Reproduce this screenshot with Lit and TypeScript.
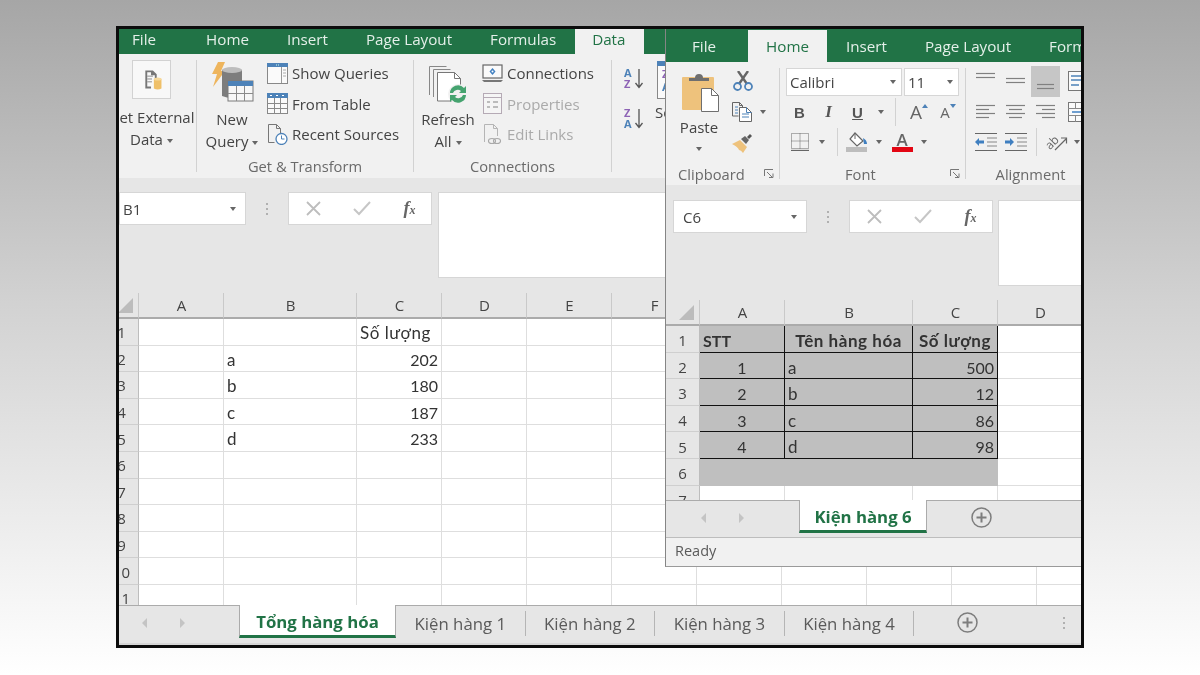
import { LitElement, html, svg, css } from "lit";
import { customElement } from "lit/decorators.js";

// ---- icons ----
const icoGetData = html`<svg width="39" height="39" viewBox="0 0 39 39">
  <path d="M13 11h8l4 4v4h-2v-3h-4v-3h-4v15h4v2h-6z" fill="#777"/>
  <path d="M15 17h6M15 20h5M15 23h5" stroke="#888"/>
  <path d="M22 20q4-2 8 0v10q-4 2-8 0z" fill="#efc069"/><ellipse cx="26" cy="20" rx="4" ry="1.6" fill="#f6d99c"/>
</svg>`;
const icoNewQuery = html`<svg width="43" height="43" viewBox="0 0 43 43">
  <path d="M7 0h7l-4 9h4L2 25l4-13H1z" fill="#eeb55d"/>
  <path d="M11 8q10-4 20 0v26q-10 4-20 0z" fill="#7d7d7d"/><ellipse cx="21" cy="8" rx="10" ry="3" fill="#bdbdbd"/>
  <rect x="17" y="19" width="25" height="20" fill="#f7f7f7" stroke="#7a7a7a"/><rect x="17" y="19" width="25" height="5" fill="#4d82b8"/>
  <path d="M25.500 24v15M33.500 24v15M17 31.500h25" stroke="#8a8a8a"/>
</svg>`;
const icoShowQueries = html`<svg width="21" height="21" viewBox="0 0 21 21">
  <rect x=".5" y=".5" width="20" height="20" fill="#fafafa" stroke="#888"/><rect x="0" y="0" width="21" height="4" fill="#4d82b8"/>
  <path d="M14.500 4v16" stroke="#999"/><path d="M16 7h3M16 10h3M16 13h3" stroke="#aaa"/><path d="M9 2h4" stroke="#cfe" stroke-dasharray="1 1"/>
</svg>`;
const icoFromTable = html`<svg width="21" height="21" viewBox="0 0 21 21">
  <rect x=".5" y=".5" width="20" height="20" fill="#fafafa" stroke="#888"/><rect x="0" y="0" width="21" height="5" fill="#4d82b8"/>
  <path d="M7.500 5v16M13.500 5v16M0 10.500h21M0 15.500h21" stroke="#8a8a8a"/><path d="M3 2.500h2M9 2.500h2M15 2.500h2" stroke="#fff"/>
</svg>`;
const icoRecent = html`<svg width="21" height="21" viewBox="0 0 21 21">
  <path d="M1.500 18.500V.5h8l4 4v5M9.500.5v4h4M1.500 18.500h6" fill="none" stroke="#777"/>
  <circle cx="14.500" cy="15" r="5.500" fill="#fff" stroke="#4d82b8" stroke-width="1.300"/><path d="M14.500 11.500V15h3" fill="none" stroke="#4d82b8"/>
</svg>`;
const icoRefresh = html`<svg width="40" height="40" viewBox="0 0 40 40">
  <path d="M1.500 30V1.500h17M5.500 32V4.500h17" fill="none" stroke="#888"/>
  <path d="M9.500 36V7.500h17l6 6V36z" fill="#fff" stroke="#777"/><path d="M26.500 7.500v6h6" fill="none" stroke="#777"/>
  <circle cx="30" cy="29" r="10" fill="#f1f1f1"/>
  <path d="M22 28a8 8 0 0 1 14-5l2-2v7h-7l2-2a5 5 0 0 0-8 2z M38 30a8 8 0 0 1-14 5l-2 2v-7h7l-2 2a5 5 0 0 0 8-2z" fill="#45a36f"/>
</svg>`;
const icoConnections = html`<svg width="21" height="19" viewBox="0 0 21 19">
  <rect x="1" y="1" width="19" height="13" fill="#fafafa" stroke="#666" stroke-width="1.200"/>
  <path d="M0 16h21l-2 2H2z" fill="#777"/><path d="M10.500 4l3 3.500-3 3.500-3-3.500z" fill="#3f7fc0"/><circle cx="10.500" cy="7.500" r="1" fill="#fff"/>
</svg>`;
const icoProperties = html`<svg width="19" height="21" viewBox="0 0 19 21">
  <rect x=".5" y=".5" width="18" height="20" fill="#f5f5f5" stroke="#b5aab5"/><path d="M0 4.500h19" stroke="#b5aab5"/>
  <path d="M4 9h3M4 14h3M10 9h5M10 14h5" stroke="#a9a9a9" stroke-width="1.500"/>
</svg>`;
const icoEditLinks = html`<svg width="19" height="21" viewBox="0 0 19 21">
  <path d="M1.500 18V.5h9l4 4V12M10.500.5v4h4" fill="none" stroke="#b5b5b5"/>
  <ellipse cx="9" cy="17" rx="3.500" ry="2.500" fill="none" stroke="#a9a9a9" stroke-width="1.200"/><ellipse cx="14" cy="17" rx="3.500" ry="2.500" fill="none" stroke="#a9a9a9" stroke-width="1.200"/>
</svg>`;
const icoSort = (top: string, bottom: string, topFill: string, bottomFill: string) => html`<svg width="20" height="23" viewBox="0 0 20 23">
  <text x="0" y="10" class="sort" fill=${topFill}>${top}</text><text x="0" y="21" class="sort" fill=${bottomFill}>${bottom}</text>
  <path d="M15 2v18M11.500 16l3.500 4.500 3.500-4.500" fill="none" stroke="#555" stroke-width="1.300"/>
</svg>`;
const icoSortBig = html`<svg width="24" height="38" viewBox="0 0 24 38">
  <rect x=".5" y=".5" width="23" height="37" fill="#fafafa" stroke="#888"/><rect width="24" height="5" fill="#4d82b8"/>
  <text x="5" y="17" class="sort" fill="#8d63b5">Z</text><text x="5" y="30" class="sort" fill="#4d82b8">A</text>
</svg>`;
const icoPaste = html`<svg width="37" height="40" viewBox="0 0 37 40">
  <rect x="0" y="5" width="32" height="33" rx="1" fill="#eec27c"/>
  <path d="M7 9V6h6q0-4 4-4t4 4h6v3z" fill="#6f6f6f"/>
  <path d="M19.500 16.500h10l7 7v16h-17z" fill="#fff" stroke="#6f6f6f"/><path d="M29.500 16.500v7h7" fill="none" stroke="#6f6f6f"/>
</svg>`;
const icoCut = html`<svg width="20" height="20" viewBox="0 0 20 20">
  <path d="M5 0l9 13M15 0L6 13" stroke="#666" stroke-width="2.400"/>
  <circle cx="4.500" cy="15.500" r="3.500" fill="none" stroke="#4d82b8" stroke-width="1.800"/><circle cx="15.500" cy="15.500" r="3.500" fill="none" stroke="#4d82b8" stroke-width="1.800"/>
</svg>`;
const icoCopy = html`<svg width="21" height="20" viewBox="0 0 21 20">
  <path d="M.5 14V.5h7l3 3V6M7.500.5v3h3M.5 14h6" fill="none" stroke="#666"/>
  <path d="M7.500 5.500h7l5 5v9h-12z" fill="#fff" stroke="#666"/><path d="M14.500 5.500v5h5M10 12h7M10 15h7" fill="none" stroke="#4d82b8"/>
  <path d="M3 5h3M3 8h3M3 11h3" stroke="#4d82b8"/>
</svg>`;
const icoPainter = html`<svg width="21" height="20" viewBox="0 0 21 20">
  <path d="M0 11l8-4 7 7-4 6q-2-3-4-3-1-3-7-6z" fill="#eec27c"/>
  <path d="M9 6l4-3 4 4-3 4z" fill="#666"/><path d="M15 4l3-3 2 2-3 3z" fill="#555"/>
</svg>`;
const icoBorder = html`<svg width="18" height="18" viewBox="0 0 18 18">
  <path d="M.5 .5h17v15H.5zM9 .5v15M.5 8h17" fill="none" stroke="#666" stroke-dasharray="1 1"/><path d="M0 17.500h18" stroke="#666" stroke-width="1.300"/>
</svg>`;
const icoFill = html`<svg width="22" height="20" viewBox="0 0 22 20">
  <path d="M9 1l8 8-6 5-7-7z" fill="#fff" stroke="#666" stroke-width="1.200"/><path d="M9 1v6" stroke="#666"/>
  <path d="M17 6q4 2 4 6h-3z" fill="#3f7fc0"/><rect x="0" y="15" width="21" height="5" fill="#bdbdbd"/>
</svg>`;
const lines = (rows: [number, number, number][], w = 20, h = 20, stroke = "#808080") => html`<svg width=${w} height=${h} viewBox="0 0 ${w} ${h}">
  ${rows.map(([x1, x2, y]) => svg`<path d="M${x1} ${y}.5H${x2}" stroke=${stroke} stroke-width="1.200"/>`)}
</svg>`;
const icoIndent = (dir: number) => html`<svg width="22" height="20" viewBox="0 0 22 20">
  <path d="M0 1.500h22M0 18.500h22" stroke="#666" stroke-width="1.200"/><path d="M12 6h10M12 10h10M12 14h10" stroke="#888" stroke-width="1.200"/>
  <path d=${dir < 0 ? "M0 10l4-4v2.500h5v3H4V14z" : "M9 10L5 6v2.500H0v3h5V14z"} fill="#3f7fc0"/>
</svg>`;
const icoOrient = html`<svg width="22" height="20" viewBox="0 0 22 20">
  <text x="0" y="15" class="orient" transform="rotate(-45 6 12)">ab</text><path d="M9 18L20 7M15 6h5.500v5.500" fill="none" stroke="#666" stroke-width="1.200"/>
</svg>`;
const icoWrap = html`<svg class="edge" width="22" height="20" viewBox="0 0 22 20">
  <rect x=".5" y=".5" width="21" height="19" fill="#fafafa" stroke="#777"/><path d="M3 5h16M3 9h12M3 14h8" stroke="#4d82b8" stroke-width="1.300"/>
</svg>`;
const icoMerge = html`<svg class="edge" width="22" height="20" viewBox="0 0 22 20">
  <rect x=".5" y=".5" width="21" height="19" fill="#fafafa" stroke="#777"/><path d="M0 6.500h22M0 13.500h22M7.500 0v6M7.500 14v6M14.500 0v6M14.500 14v6" stroke="#888"/>
  <path d="M4 10h14" stroke="#3f7fc0" stroke-width="1.500"/>
</svg>`;
const icoPlus = html`<svg width="21" height="21" viewBox="0 0 21 21">
  <circle cx="10.500" cy="10.500" r="9.500" fill="none" stroke="#7d7d7d" stroke-width="1.500"/><path d="M10.500 5.500v10M5.500 10.500h10" stroke="#7d7d7d" stroke-width="2"/>
</svg>`;
const icoX = html`<svg width="15" height="15" viewBox="0 0 15 15"><path d="M1 1l13 13M14 1L1 14" stroke="#bdbdbd" stroke-width="1.800"/></svg>`;
const icoCheck = html`<svg width="18" height="15" viewBox="0 0 18 15"><path d="M1 8l5 5L17 1" fill="none" stroke="#c6c6c6" stroke-width="2"/></svg>`;
const icoLauncher = html`<svg width="10" height="10" viewBox="0 0 10 10"><path d="M.5 7V.5H9M3 3l5 5M5 8.500h4v-4" fill="none" stroke="#777"/></svg>`;
const navArrows = html`<svg width="43" height="12" viewBox="0 0 43 12"><path d="M5 1L0 6l5 5zM38 1l5 5-5 5z" fill="#c4c4c4"/></svg>`;

// ---- sheet data ----
type Cell = { t?: string | number; c?: string };

const LEFT_COLS = [20, 85, 133, 85, 85, 85, 85, 85, 85, 85, 85, 85, 85];
const RIGHT_COLS = [34, 85, 128, 85, 85];
const HEADS = "ABCDEFGHIJKL";

const leftData: Record<string, Cell> = {
  "1-2": { t: "Số lượng", c: "txt" },
  "2-1": { t: "a", c: "txt" }, "2-2": { t: 202, c: "num" },
  "3-1": { t: "b", c: "txt" }, "3-2": { t: 180, c: "num" },
  "4-1": { t: "c", c: "txt" }, "4-2": { t: 187, c: "num" },
  "5-1": { t: "d", c: "txt" }, "5-2": { t: 233, c: "num" },
};

const rightData: Record<string, Cell> = {
  "1-0": { t: "STT", c: "b" }, "1-1": { t: "Tên hàng hóa", c: "b ctr txt" }, "1-2": { t: "Số lượng", c: "b ctr txt" },
  "2-0": { t: 1, c: "ctr" }, "2-1": { t: "a", c: "txt" }, "2-2": { t: 500, c: "num" },
  "3-0": { t: 2, c: "ctr" }, "3-1": { t: "b", c: "txt" }, "3-2": { t: 12, c: "num" },
  "4-0": { t: 3, c: "ctr" }, "4-1": { t: "c", c: "txt" }, "4-2": { t: 86, c: "num" },
  "5-0": { t: 4, c: "ctr" }, "5-1": { t: "d", c: "txt" }, "5-2": { t: 98, c: "num" },
};

@customElement("app-root")
export class AppRoot extends LitElement {
  static styles = css`
    :host {
      display: flex;
      width: 1200px;
      height: 675px;
      padding: 26px 116px 27px;
      box-sizing: border-box;
      background: linear-gradient(#a6a6a6 0%, #d2d2d2 45%, #ffffff 100%);
      font-family: "Open Sans", "Noto Sans", sans-serif;
      color: #444;
    }
    .frame {
      position: relative;
      flex: 1;
      border: 3px solid #0c0c0c;
      overflow: hidden;
      background: #fff;
      filter: blur(0.45px);
    }
    .window {
      display: flex;
      flex-direction: column;
      height: 100%;
    }
    .window.front {
      position: absolute;
      top: 0;
      left: 546px;
      right: 0;
      height: 538px;
      background: #fff;
      border-left: 1px solid #858585;
      border-bottom: 1px solid #9a9a9a;
      box-sizing: border-box;
    }

    /* title tabs */
    .tabs {
      display: flex;
      flex: none;
      height: 25px;
      background: #217346;
      color: #e4efe9;
      font-size: 15.2px;
      white-space: nowrap;
      overflow: hidden;
    }
    .tabs span {
      padding: 0 19px;
      line-height: 18px;
      padding-top: 1px;
    }
    .tabs .file {
      padding: 1px 31px 0 13px;
    }
    .tabs .on {
      background: #f1f1f1;
      color: #217346;
      padding: 1px 19px 0 17px;
    }
    .front .tabs {
      height: 33px;
    }
    .front .tabs span {
      line-height: 33px;
      padding-top: 1px;
    }
    .front .tabs .file {
      padding-left: 26px;
      padding-right: 32px;
    }
    .front .tabs .on {
      padding: 1px 18px 0 18px;
      margin-top: 1px;
      line-height: 31px;
    }

    /* ribbon */
    .ribbon {
      display: flex;
      flex: none;
      height: 124px;
      background: #f1f1f1;
      font-size: 15px;
      white-space: nowrap;
    }
    .group {
      display: flex;
      flex-direction: column;
      flex: none;
      border-right: 1px solid #d2d2d2;
      margin: 6px 0;
      position: relative;
    }
    .body {
      display: flex;
      flex: 1;
      margin-top: -6px;
      min-height: 0;
    }
    .foot {
      display: flex;
      justify-content: center;
      align-items: center;
      height: 20px;
      margin-bottom: -4px;
      color: #6a6a6a;
      font-size: 14.7px;
    }
    .big {
      display: flex;
      flex-direction: column;
      align-items: center;
      flex: none;
      padding-top: 8px;
      line-height: 22px;
    }
    .big svg {
      margin-bottom: 3px;
    }
    .small-col {
      display: flex;
      flex-direction: column;
      padding-top: 4px;
    }
    .small {
      display: flex;
      align-items: center;
      gap: 4px;
      height: 30.5px;
    }
    .small .ic {
      display: flex;
      justify-content: center;
      width: 21px;
    }
    .off {
      color: #aaa;
    }
    .caret {
      display: inline-block;
      width: 0;
      height: 0;
      margin-left: 4px;
      vertical-align: middle;
      border-left: 3.5px solid transparent;
      border-right: 3.5px solid transparent;
      border-top: 4px solid #666;
    }
    .g-ext {
      width: 77px;
    }
    .g-ext .body {
      justify-content: center;
      padding-right: 12px;
    }
    .g-ext .big {
      padding-top: 6px;
    }
    .tile {
      display: flex;
      align-items: center;
      justify-content: center;
      width: 39px;
      height: 39px;
      margin-bottom: 7px;
      box-sizing: border-box;
      background: #f8f8f8;
      border: 1px solid #d2d2d2;
    }
    .g-get {
      width: 216px;
    }
    .g-get .big {
      width: 70px;
    }
    .g-conn {
      width: 197px;
    }
    .g-conn .big {
      width: 68px;
      padding-top: 11px;
    }
    .g-sort .body {
      padding-left: 12px;
      gap: 11px;
    }
    .sort-col {
      display: flex;
      flex-direction: column;
      gap: 17px;
      padding-top: 13px;
    }
    .g-sort .big {
      padding-top: 7px;
      line-height: 20px;
    }
    text.sort {
      font: 700 11px "Open Sans", sans-serif;
    }
    text.orient {
      font: 12px "Open Sans", sans-serif;
      fill: #666;
    }

    .front .ribbon {
      height: 123px;
    }
    .g-clip {
      width: 113px;
    }
    .g-clip .big {
      width: 66px;
      padding-top: 10px;
    }
    .g-clip .big svg {
      margin: 0 0 4px 3px;
    }
    .g-clip .big .caret {
      margin-top: 9px;
    }
    .g-clip .small-col {
      padding-top: 3px;
    }
    .g-clip .small {
      height: 31px;
      gap: 7px;
    }
    .front .foot {
      margin-bottom: -5px;
    }
    .foot.split {
      justify-content: flex-start;
      padding: 0 5px 0 12px;
    }
    .foot.split svg {
      margin-left: auto;
    }
    .g-font {
      width: 185px;
    }
    .g-font .body,
    .g-align .body {
      flex-direction: column;
      padding-left: 5px;
    }
    .selects {
      display: flex;
      gap: 2px;
      height: 28px;
      margin: 6px 0 0 1px;
    }
    .select {
      display: flex;
      align-items: center;
      justify-content: space-between;
      box-sizing: border-box;
      padding: 0 5px 0 3px;
      background: #fff;
      border: 1px solid #d6d6d6;
    }
    .select.face {
      width: 116px;
    }
    .select.size {
      width: 55px;
    }
    .row {
      display: grid;
      align-items: center;
      justify-items: center;
    }
    .row2 {
      grid-template-columns: 29px 29px 29px 18px 10px 32px 26px;
      height: 32px;
    }
    .row3 {
      grid-template-columns: 30px 14px 16px 24px 20px 26px 18px;
      height: 28px;
    }
    .vr {
      width: 1px;
      height: 28px;
      background: #d2d2d2;
    }
    .caret.flat {
      margin-left: 0;
    }
    .b-ic {
      font-size: 15px;
      font-weight: 700;
      color: #555;
      font-family: "Liberation Sans", sans-serif;
    }
    .b-ic.i {
      font-style: italic;
      font-family: "Liberation Serif", serif;
      font-size: 17px;
    }
    .b-ic.u {
      text-decoration: underline;
    }
    .grow-a {
      position: relative;
      color: #666;
      font-size: 19px;
      line-height: 20px;
    }
    .grow-a.sm {
      font-size: 15px;
    }
    .grow-a::after {
      content: "";
      position: absolute;
      top: 2px;
      left: 100%;
      border-left: 3px solid transparent;
      border-right: 3px solid transparent;
      border-bottom: 4px solid #4d82b8;
    }
    .grow-a.sm::after {
      border-bottom: 0;
      border-top: 4px solid #4d82b8;
    }
    .red-a {
      display: flex;
      flex-direction: column;
      align-items: center;
      width: 21px;
      color: #666;
      font-size: 17px;
      line-height: 15px;
      font-weight: 600;
    }
    .red-a::after {
      content: "";
      align-self: stretch;
      height: 5px;
      background: #e30613;
    }
    .foot.g-foot-font {
      justify-content: flex-start;
      padding: 0 5px 0 65px;
    }
    .g-foot-font svg {
      margin-left: auto;
    }
    .g-align {
      width: 115px;
      border-right: 0;
    }
    .a1,
    .a2 {
      grid-template-columns: 30px 30px 29px 30px;
    }
    .a1 {
      height: 32px;
      margin-top: 3px;
    }
    .a2 {
      height: 30px;
    }
    .a3 {
      grid-template-columns: 30px 30px 10px 32px 8px;
      height: 30px;
    }
    .edge {
      justify-self: start;
      margin-left: 8px;
    }
    .pressed {
      display: flex;
      align-items: center;
      justify-content: center;
      width: 29px;
      height: 31px;
      background: #c6c6c6;
    }
    .g-align .foot {
      padding-left: 14px;
    }

    /* formula bar */
    .formula {
      display: flex;
      flex: none;
      height: 115px;
      padding-top: 14px;
      box-sizing: border-box;
      background: #e6e6e6;
      font-size: 15px;
      overflow: hidden;
    }
    .front .formula {
      padding: 15px 0 0 7px;
    }
    .name {
      display: flex;
      align-items: center;
      justify-content: space-between;
      flex: none;
      box-sizing: border-box;
      width: 127px;
      height: 33px;
      padding: 0 9px 0 3px;
      background: #fff;
      border: 1px solid #d6d6d6;
      color: #444;
    }
    .front .name {
      width: 134px;
      padding: 0 9px;
    }
    .dots {
      display: flex;
      flex-direction: column;
      align-items: center;
      justify-content: center;
      gap: 3px;
      flex: none;
      width: 42px;
      height: 33px;
    }
    .dots i {
      width: 2px;
      height: 2px;
      background: #b0b0b0;
    }
    .fx-box {
      display: grid;
      grid-template-columns: 48px 49px 47px;
      align-items: center;
      justify-items: center;
      flex: none;
      box-sizing: border-box;
      width: 144px;
      height: 33px;
      background: #fff;
      border: 1px solid #d6d6d6;
    }
    .fx {
      font: italic 700 18px "Liberation Serif", serif;
      color: #666;
    }
    .fx small {
      font-size: 12px;
    }
    .input {
      flex: 1;
      height: 86px;
      margin-left: 6px;
      background: #fff;
      border: 1px solid #d6d6d6;
      box-sizing: border-box;
    }
    .front .formula .input {
      margin-left: 5px;
      border-right: 0;
    }

    /* grid */
    .sheet {
      display: grid;
      flex: 1;
      min-height: 0;
      grid-auto-rows: 26.6px;
      grid-template-rows: 26px;
      align-content: start;
      overflow: hidden;
      background: #fff;
      font-family: Lato, "Noto Sans", sans-serif;
      font-size: 16px;
      color: #333;
    }
    .ch {
      display: flex;
      align-items: center;
      justify-content: center;
      height: 26px;
      padding-left: 1px;
      box-sizing: border-box;
      background: #e6e6e6;
      border-right: 1px solid #c9c9c9;
      border-bottom: 2px solid #ababab;
      font: 15px "Open Sans", sans-serif;
      color: #444;
    }
    .corner {
      position: relative;
    }
    .corner::after {
      content: "";
      position: absolute;
      right: 5px;
      bottom: 4px;
      border-left: 15px solid transparent;
      border-bottom: 15px solid #bcbcbc;
    }
    .rh {
      display: flex;
      align-items: center;
      justify-content: center;
      padding-top: 1px;
      box-sizing: border-box;
      background: #e6e6e6;
      border-right: 1px solid #bdbdbd;
      border-bottom: 1px solid #cfcfcf;
      font: 15px "Open Sans", sans-serif;
      color: #444;
    }
    .front .rh {
      padding-top: 3px;
    }
    .rh.cut span {
      flex: none;
      width: 34px;
      margin-left: -14px;
      text-align: center;
    }
    .c {
      box-sizing: border-box;
      padding: 0 3px;
      line-height: 27px;
      border-right: 1px solid #dedede;
      border-bottom: 1px solid #dedede;
      white-space: nowrap;
      overflow: hidden;
    }
    .front .c {
      line-height: 29px;
    }
    .c.txt {
      font-size: 17px;
      letter-spacing: 0.55px;
    }
    .c.num {
      text-align: right;
    }
    .c.ctr {
      text-align: center;
    }
    .c.b {
      font-weight: 700;
    }
    .c.sel {
      background: #bfbfbf;
      border-right-color: #bfbfbf;
      border-bottom-color: #bfbfbf;
    }
    .c.line {
      border-right: 1px solid #111;
      border-bottom: 1px solid #111;
    }

    /* sheet tabs */
    .bar {
      display: flex;
      align-items: flex-start;
      flex: none;
      box-sizing: border-box;
      height: 40px;
      background: #e6e6e6;
      border-top: 1px solid #ababab;
      border-bottom: 2px solid #d6d6d6;
      font-size: 16.8px;
      color: #5a5a5a;
      white-space: nowrap;
    }
    .front .bar {
      height: 38px;
      border-bottom: 1px solid #bdbdbd;
    }
    .nav {
      display: flex;
      align-items: center;
      justify-content: center;
      flex: none;
      width: 120px;
      height: 33px;
      padding-right: 32px;
      box-sizing: border-box;
    }
    .front .nav {
      width: 133px;
      padding: 0 20px 0 0;
    }
    .sheet-tab {
      display: flex;
      align-items: center;
      justify-content: center;
      flex: none;
      box-sizing: border-box;
      width: 157px;
      height: 33px;
      margin-top: -1px;
      padding-top: 3px;
      background: #fff;
      color: #217346;
      font-weight: 700;
      border-left: 1px solid #ababab;
      border-right: 1px solid #ababab;
      border-bottom: 3px solid #217346;
    }
    .front .sheet-tab {
      width: 128px;
    }
    .other {
      flex: none;
      height: 25px;
      margin-top: 5px;
      padding: 0 18.5px;
      line-height: 25px;
      border-right: 1px solid #b5b5b5;
    }
    .add {
      display: flex;
      flex: none;
      margin: 6px 0 0 43px;
    }
    .front .add {
      margin-left: 44px;
    }
    .bar .dots {
      margin-left: auto;
      width: 34px;
    }
    .status {
      flex: none;
      height: 28px;
      box-sizing: border-box;
      padding: 3px 9px;
      background: #f1f1f1;
      font-size: 14.5px;
      color: #5a5a5a;
    }
  `;

  renderSheet(colsW: number[], rows: number, data: Record<string, Cell>, front: boolean) {
    const tpl = colsW.map((w) => `${w}px`).join(" ");
    return html`<div class="sheet" style="grid-template-columns:${tpl}">
      ${colsW.map((_, i) =>
        i === 0
          ? html`<div class="ch corner"></div>`
          : html`<div class="ch">${HEADS[i - 1]}</div>`
      )}
      ${Array.from({ length: rows }, (_, r) => r + 1).map(
        (r) => html`
          <div class="rh ${front ? "" : "cut"}"><span>${r}</span></div>
          ${colsW.slice(1).map((_, c) => {
            const cell = data[`${r}-${c}`];
            const inBlock = front && c < 3 && r <= 6;
            const cls = [
              "c",
              cell?.c ?? "",
              inBlock ? "sel" : "",
              inBlock && r <= 5 ? "line" : "",
            ].join(" ");
            return html`<div class=${cls}>${cell?.t ?? ""}</div>`;
          })}
        `
      )}
    </div>`;
  }

  renderFormula(name: string) {
    return html`<div class="formula">
      <div class="name">${name}<span class="caret"></span></div>
      <div class="dots"><i></i><i></i><i></i></div>
      <div class="fx-box">${icoX}${icoCheck}<span class="fx">f<small>x</small></span></div>
      <div class="input"></div>
    </div>`;
  }

  renderBack() {
    return html`<div class="window">
      <div class="tabs">
        <span class="file">File</span><span>Home</span><span>Insert</span><span>Page Layout</span><span>Formulas</span><span class="on">Data</span>
      </div>
      <div class="ribbon">
        <div class="group g-ext">
          <div class="body">
            <div class="big"><div class="tile">${icoGetData}</div><div>Get External</div><div>Data<span class="caret"></span></div></div>
          </div>
        </div>
        <div class="group g-get">
          <div class="body">
            <div class="big">${icoNewQuery}<div>New</div><div>Query<span class="caret"></span></div></div>
            <div class="small-col">
              <div class="small"><span class="ic">${icoShowQueries}</span>Show Queries</div>
              <div class="small"><span class="ic">${icoFromTable}</span>From Table</div>
              <div class="small"><span class="ic">${icoRecent}</span>Recent Sources</div>
            </div>
          </div>
          <div class="foot">Get &amp; Transform</div>
        </div>
        <div class="group g-conn">
          <div class="body">
            <div class="big">${icoRefresh}<div>Refresh</div><div>All<span class="caret"></span></div></div>
            <div class="small-col">
              <div class="small"><span class="ic">${icoConnections}</span>Connections</div>
              <div class="small off"><span class="ic">${icoProperties}</span>Properties</div>
              <div class="small off"><span class="ic">${icoEditLinks}</span>Edit Links</div>
            </div>
          </div>
          <div class="foot">Connections</div>
        </div>
        <div class="group g-sort">
          <div class="body">
            <div class="sort-col">${icoSort("A", "Z", "#4d82b8", "#8d63b5")}${icoSort("Z", "A", "#8d63b5", "#4d82b8")}</div>
            <div class="big">${icoSortBig}<div>Sort</div></div>
          </div>
        </div>
      </div>
      ${this.renderFormula("B1")}
      ${this.renderSheet(LEFT_COLS, 11, leftData, false)}
      <div class="bar">
        <div class="nav">${navArrows}</div>
        <div class="sheet-tab">Tổng hàng hóa</div>
        <div class="other">Kiện hàng 1</div>
        <div class="other">Kiện hàng 2</div>
        <div class="other">Kiện hàng 3</div>
        <div class="other">Kiện hàng 4</div>
        <div class="add">${icoPlus}</div>
        <div class="dots"><i></i><i></i><i></i></div>
      </div>
    </div>`;
  }

  renderFront() {
    return html`<div class="window front">
      <div class="tabs">
        <span class="file">File</span><span class="on">Home</span><span>Insert</span><span>Page Layout</span><span>Formulas</span>
      </div>
      <div class="ribbon">
        <div class="group g-clip">
          <div class="body">
            <div class="big">${icoPaste}<div>Paste</div><span class="caret flat"></span></div>
            <div class="small-col">
              <div class="small"><span class="ic">${icoCut}</span></div>
              <div class="small"><span class="ic">${icoCopy}</span><span class="caret flat"></span></div>
              <div class="small"><span class="ic">${icoPainter}</span></div>
            </div>
          </div>
          <div class="foot split">Clipboard${icoLauncher}</div>
        </div>
        <div class="group g-font">
          <div class="body">
            <div class="selects">
              <div class="select face">Calibri<span class="caret flat"></span></div>
              <div class="select size">11<span class="caret flat"></span></div>
            </div>
            <div class="row row2">
              <span class="b-ic">B</span><span class="b-ic i">I</span><span class="b-ic u">U</span><span class="caret flat"></span><span class="vr"></span>
              <span class="grow-a">A</span><span class="grow-a sm">A</span>
            </div>
            <div class="row row3">
              ${icoBorder}<span class="caret flat"></span><span class="vr"></span>${icoFill}<span class="caret flat"></span>
              <span class="red-a">A</span><span class="caret flat"></span>
            </div>
          </div>
          <div class="foot g-foot-font">Font${icoLauncher}</div>
        </div>
        <div class="group g-align">
          <div class="body">
            <div class="row a1">
              ${lines([[0, 19, 2], [0, 19, 6]])}${lines([[0, 19, 7], [0, 19, 11]])}
              <div class="pressed">${lines([[1, 18, 13], [1, 18, 17]])}</div>${icoWrap}
            </div>
            <div class="row a2">
              ${lines([[0, 19, 3], [0, 13, 7], [0, 19, 11], [0, 13, 15]])}${lines([[0, 19, 3], [3, 16, 7], [0, 19, 11], [3, 16, 15]])}
              ${lines([[0, 19, 3], [6, 19, 7], [0, 19, 11], [6, 19, 15]])}${icoMerge}
            </div>
            <div class="row a3">
              ${icoIndent(-1)}${icoIndent(1)}<span class="vr"></span>${icoOrient}<span class="caret flat"></span>
            </div>
          </div>
          <div class="foot">Alignment</div>
        </div>
      </div>
      ${this.renderFormula("C6")}
      ${this.renderSheet(RIGHT_COLS, 7, rightData, true)}
      <div class="bar">
        <div class="nav">${navArrows}</div>
        <div class="sheet-tab">Kiện hàng 6</div>
        <div class="add">${icoPlus}</div>
      </div>
      <div class="status">Ready</div>
    </div>`;
  }

  render() {
    return html`<div class="frame">${this.renderBack()}${this.renderFront()}</div>`;
  }
}
